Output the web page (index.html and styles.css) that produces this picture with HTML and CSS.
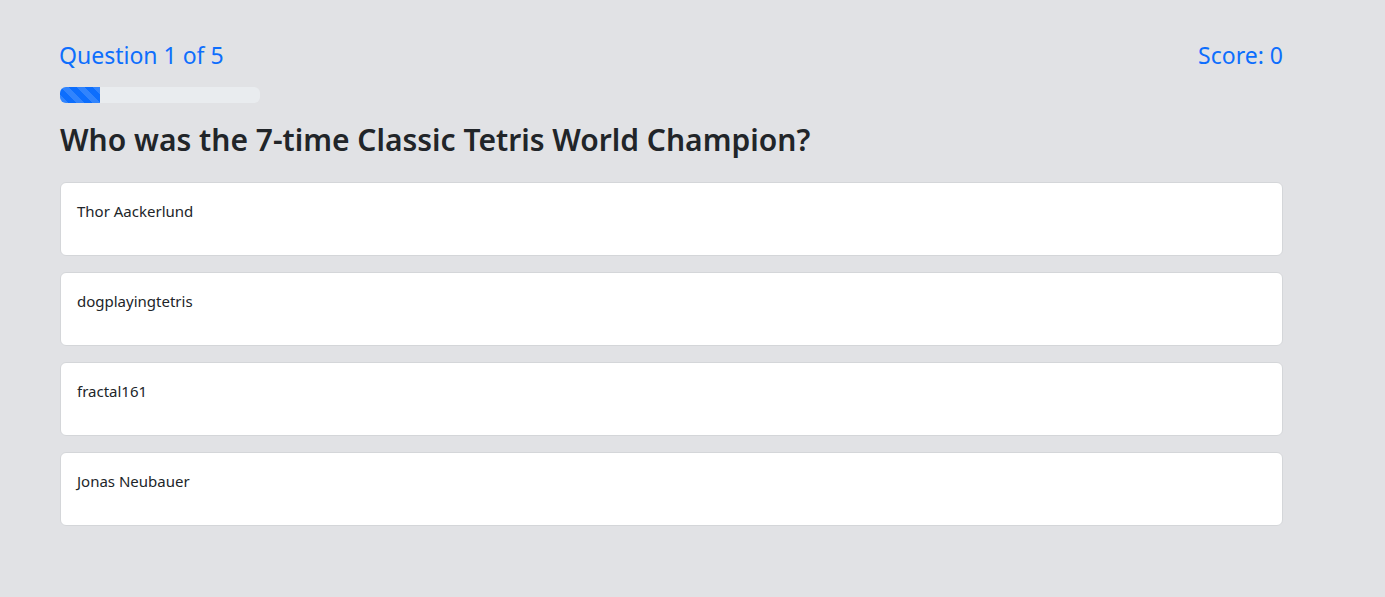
FILE: index.html
```html
<!DOCTYPE html>
<html lang="en">
<head>
<meta charset="utf-8">
<title>Quiz</title>
<link rel="stylesheet" href="styles.css">
</head>
<body>
<main class="quiz">
  <div class="quiz-header">
    <div class="counter">Question 1 of 5</div>
    <div class="score">Score: 0</div>
  </div>
  <div class="progress"><div class="progress-bar" style="width: 20%"></div></div>
  <h2 class="question">Who was the 7-time Classic Tetris World Champion?</h2>
  <div class="answers">
    <div class="answer">Thor Aackerlund</div>
    <div class="answer">dogplayingtetris</div>
    <div class="answer">fractal161</div>
    <div class="answer">Jonas Neubauer</div>
  </div>
</main>
</body>
</html>
```
FILE: styles.css
```css
* { box-sizing: border-box; }
html, body { margin: 0; padding: 0; }
body {
  background: #e1e2e5;
  font-family: "Noto Sans", "Open Sans", sans-serif;
  color: #212529;
  height: 597px;
}
.quiz {
  width: 1224px;
  margin-left: 59px;
  padding-top: 40px;
}
.quiz-header {
  display: flex;
  justify-content: space-between;
  align-items: center;
  color: #0d6efd;
  font-size: 23px;
  line-height: 30px;
}
.progress {
  margin-top: 17px;
  margin-left: 1px;
  width: 200px;
  height: 16px;
  background: #e9ecef;
  border-radius: 6px;
  overflow: hidden;
}
.progress-bar {
  height: 100%;
  background-color: #0d6efd;
  background-image: linear-gradient(45deg, rgba(255,255,255,.15) 25%, transparent 25%, transparent 50%, rgba(255,255,255,.15) 50%, rgba(255,255,255,.15) 75%, transparent 75%, transparent);
  background-size: 16px 16px;
}
.question {
  margin: 16px 0 21px 1px;
  font-size: 30px;
  line-height: 42px;
  font-weight: 600;
  color: #212529;
}
.answers {
  display: flex;
  flex-direction: column;
  gap: 16px;
  margin-left: 1px;
}
.answer {
  height: 74px;
  background: #fff;
  border: 1px solid #d4d6d9;
  border-radius: 6px;
  padding: 17px 16px;
  font-size: 15px;
  line-height: 22px;
}
```
